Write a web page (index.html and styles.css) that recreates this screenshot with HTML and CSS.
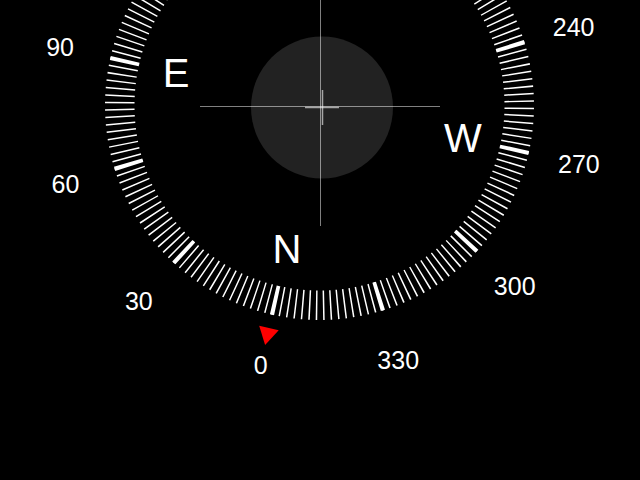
FILE: index.html
```html
<!DOCTYPE html>
<html lang="en">
<head>
  <meta charset="UTF-8">
  <meta name="viewport" content="width=device-width, initial-scale=1.0">
  <title>Compass</title>
  <link rel="stylesheet" href="styles.css">
</head>
<body>
  <div class="screen">
    <svg class="compass" width="640" height="480" viewBox="0 0 640 480">
      <!-- dial center is 319.5,105.5 ; heading puts 0 deg at 192.8 deg on screen -->
      <circle class="level" cx="322" cy="107.5" r="71"/>
      <line class="level-cross" x1="305" y1="107.5" x2="339" y2="107.5"/>
      <line class="level-cross" x1="322.5" y1="90" x2="322.5" y2="125"/>
      <line class="crosshair" x1="200" y1="106.5" x2="440" y2="106.5"/>
      <line class="crosshair" x1="320.5" y1="-14" x2="320.5" y2="226"/>

      <g transform="rotate(102.8 319.5 105.5)">
        <circle class="ticks" cx="319.5" cy="105.5" r="199.75" pathLength="360"/>
        <circle class="ticks major" cx="319.5" cy="105.5" r="199.75" pathLength="360"/>
      </g>

      <polygon class="pointer" points="319.5,-140 309.5,-122.7 329.5,-122.7" transform="rotate(192.8 319.5 105.5)"/>

      <text class="card" x="286.9" y="263.1">N</text>
      <text class="card" x="176.2" y="87.2">E</text>
      <text class="card" x="462.8" y="152.4">W</text>

      <text class="num" x="260.6" y="373.9">0</text>
      <text class="num" x="138.8" y="309.7">30</text>
      <text class="num" x="65.4" y="193.2">60</text>
      <text class="num" x="60.1" y="55.6">90</text>
      <text class="num" x="573.6" y="35.8">240</text>
      <text class="num" x="578.9" y="173.4">270</text>
      <text class="num" x="514.7" y="295.2">300</text>
      <text class="num" x="398.2" y="368.6">330</text>
    </svg>
  </div>
</body>
</html>
```

FILE: styles.css
```css
html, body {
  margin: 0;
  background: #000;
}

.screen {
  width: 640px;
  height: 480px;
  overflow: hidden;
  background: #000;
}

.compass {
  display: block;
  font-family: 'Liberation Sans', Arial, sans-serif;
}

/* bubble level in the middle */
.level {
  fill: #222;
}
.level-cross {
  stroke: rgba(255, 255, 255, 0.6);
  stroke-width: 1.5;
}
.crosshair {
  stroke: rgba(255, 255, 255, 0.5);
  stroke-width: 1;
}

/* ring of ticks, one every 2 degrees, thick one every 30 */
.ticks {
  fill: none;
  stroke: #fff;
  stroke-width: 29.5;
  stroke-dasharray: 0.43 1.57;
  stroke-dashoffset: 0.215;
}
.major {
  stroke-dasharray: 1.15 28.85;
  stroke-dashoffset: 0.575;
}

.pointer {
  fill: #ff0000;
}

.card {
  fill: #fff;
  font-size: 40px;
  text-anchor: middle;
}
.num {
  fill: #fff;
  font-size: 25px;
  text-anchor: middle;
}
```
